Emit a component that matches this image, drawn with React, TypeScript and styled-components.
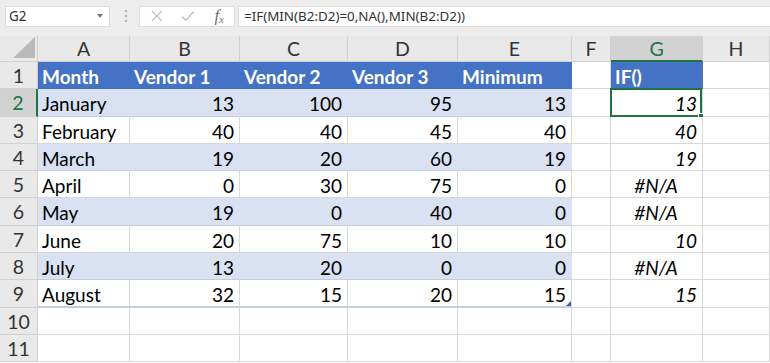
import React from 'react';
import styled, { createGlobalStyle, css } from 'styled-components';

const GlobalStyle = createGlobalStyle`
  html, body { margin: 0; padding: 0; background: #ffffff; }
  body { font-family: Lato, "Liberation Sans", sans-serif; }
`;

type Kind = 'head' | 'band' | 'plain';
type Align = 'left' | 'right' | 'center';

interface Row {
  kind: Kind;
  cells: string[];
  g: string;
  gAlign: Align;
}

const rows: Row[] = [
  { kind: 'head', cells: ['Month', 'Vendor 1', 'Vendor 2', 'Vendor 3', 'Minimum'], g: 'IF()', gAlign: 'left' },
  { kind: 'band', cells: ['January', '13', '100', '95', '13'], g: '13', gAlign: 'right' },
  { kind: 'plain', cells: ['February', '40', '40', '45', '40'], g: '40', gAlign: 'right' },
  { kind: 'band', cells: ['March', '19', '20', '60', '19'], g: '19', gAlign: 'right' },
  { kind: 'plain', cells: ['April', '0', '30', '75', '0'], g: '#N/A', gAlign: 'center' },
  { kind: 'band', cells: ['May', '19', '0', '40', '0'], g: '#N/A', gAlign: 'center' },
  { kind: 'plain', cells: ['June', '20', '75', '10', '10'], g: '10', gAlign: 'right' },
  { kind: 'band', cells: ['July', '13', '20', '0', '0'], g: '#N/A', gAlign: 'center' },
  { kind: 'plain', cells: ['August', '32', '15', '20', '15'], g: '15', gAlign: 'right' },
];

const rowHeights = [27, 28, 27, 27, 27, 28, 27, 27, 28, 27, 27];
const columns = ['A', 'B', 'C', 'D', 'E', 'F', 'G', 'H'];

const App: React.FC = () => {
  return (
    <>
      <GlobalStyle />
      <Window>
        <Toolbar>
          <NameBox>
            <span>G2</span>
            <svg width="6" height="4" viewBox="0 0 6 4">
              <path d="M0 0 L6 0 L3 4 Z" fill="#7a7a7a" />
            </svg>
          </NameBox>
          <Grip>
            <i /><i /><i />
          </Grip>
          <FxBox>
            <svg width="14" height="14" viewBox="0 0 14 14">
              <path d="M2 2 L12 12 M12 2 L2 12" stroke="#b8b8b8" strokeWidth="1.3" fill="none" />
            </svg>
            <svg width="16" height="14" viewBox="0 0 16 14">
              <path d="M2 7.5 L6 11.5 L14 2.5" stroke="#b8b8b8" strokeWidth="1.3" fill="none" />
            </svg>
            <FxLabel>f<sub>x</sub></FxLabel>
          </FxBox>
          <FormulaInput>=IF(MIN(B2:D2)=0,NA(),MIN(B2:D2))</FormulaInput>
        </Toolbar>

        <Sheet $heights={rowHeights}>
          <Corner>
            <svg width="22" height="21" viewBox="0 0 22 21">
              <path d="M22 0 L22 21 L0 21 Z" fill="#b9b9b9" />
            </svg>
          </Corner>
          {columns.map((c) => (
            <ColHeader key={c} $selected={c === 'G'}>{c}</ColHeader>
          ))}

          {Array.from({ length: 11 }, (_, i) => {
            const r = rows[i];
            const num = i + 1;
            return (
              <React.Fragment key={num}>
                <RowHeader $selected={num === 2}>{num}</RowHeader>
                {columns.slice(0, 5).map((c, ci) => {
                  const text = r ? r.cells[ci] : '';
                  return (
                    <Cell key={c} $kind={r ? r.kind : 'plain'}
                      $align={ci === 0 || r?.kind === 'head' ? 'left' : 'right'}
                      $last={num === 9}>
                      {text}
                      {num === 9 && c === 'E' && <ResizeHandle />}
                    </Cell>
                  );
                })}
                <Cell $kind="plain" $align="left" />
                <Cell $kind={r?.kind === 'head' ? 'head' : 'plain'}
                  $align={r ? r.gAlign : 'right'} $italic={!!r && r.kind !== 'head'}>
                  {r ? r.g : ''}
                  {num === 2 && <Selection><FillHandle /></Selection>}
                </Cell>
                <Cell $kind="plain" $align="left" />
              </React.Fragment>
            );
          })}
        </Sheet>
      </Window>
    </>
  );
};

const Window = styled.div`
  width: 770px;
  height: 363px;
  overflow: hidden;
  background: #ffffff;
`;

const Toolbar = styled.div`
  align-items: center;
  background: #ededed;
  box-sizing: border-box;
  display: flex;
  height: 36px;
  padding: 0 0 4px 5px;
`;

const boxCss = css`
  background: #ffffff;
  border: 1px solid #dcdcdc;
  box-sizing: border-box;
  height: 21px;
`;

const NameBox = styled.div`
  ${boxCss};
  align-items: center;
  color: #333333;
  display: flex;
  font-family: "Noto Sans", "Liberation Sans", sans-serif;
  font-size: 13.5px;
  justify-content: space-between;
  padding: 0 6px 0 3px;
  width: 105px;
`;

const Grip = styled.div`
  display: flex;
  flex-direction: column;
  gap: 3px;
  padding: 0 12px 0 15px;
  i {
    background: #b0b0b0;
    display: block;
    height: 2px;
    width: 2px;
  }
`;

const FxBox = styled.div`
  ${boxCss};
  align-items: center;
  display: flex;
  gap: 16px;
  padding: 0 10px 0 10px;
  width: 96px;
`;

const FxLabel = styled.span`
  color: #707070;
  font-family: "Liberation Serif", serif;
  font-size: 17px;
  font-style: italic;
  line-height: 1;
  margin-left: 3px;
  sub { font-size: 11px; vertical-align: -2px; }
`;

const FormulaInput = styled.div`
  ${boxCss};
  align-items: center;
  border-right: none;
  color: #333333;
  display: flex;
  flex: 1;
  font-family: "Noto Sans", "Liberation Sans", sans-serif;
  font-size: 13.4px;
  margin-left: 3px;
  padding-left: 5px;
`;

const Sheet = styled.div<{ $heights: number[] }>`
  display: grid;
  grid-template-columns: 38px 92px 110px 108px 110px 114px 39px 92px 67px;
  grid-template-rows: 26px ${(p) => p.$heights.map((h) => `${h}px`).join(' ')};
`;

const headerCss = css`
  align-items: center;
  background: #e9e9e9;
  border-bottom: 1px solid #d0d0d0;
  border-right: 1px solid #d0d0d0;
  box-sizing: border-box;
  color: #333333;
  display: flex;
  font-family: Lato, "Liberation Sans", sans-serif;
  font-size: 19.5px;
  justify-content: center;
`;

const Corner = styled.div`
  ${headerCss};
  align-items: flex-end;
  justify-content: flex-end;
  padding: 0 2px 3px 0;
`;

const ColHeader = styled.div<{ $selected?: boolean }>`
  ${headerCss};
  ${(p) => p.$selected && css`
    background: #d2d2d2;
    border-bottom: 2px solid #217346;
    color: #217346;
  `}
`;

const RowHeader = styled.div<{ $selected?: boolean }>`
  ${headerCss};
  ${(p) => p.$selected && css`
    background: #d2d2d2;
    border-right: 2px solid #217346;
    color: #217346;
  `}
`;

const kindCss = {
  head: css`
    background: #4472c4;
    border-bottom: 1px solid #4472c4;
    border-right: 1px solid #4472c4;
    color: #ffffff;
    font-weight: 700;
  `,
  band: css`
    background: #d9e1f2;
    border-bottom: 1px solid #c3cde0;
    border-right: 1px solid #d9e1f2;
    color: #000000;
  `,
  plain: css`
    background: #ffffff;
    border-bottom: 1px solid #d8d8d8;
    border-right: 1px solid #d8d8d8;
    color: #000000;
  `,
};

const Cell = styled.div<{ $kind: Kind; $align: Align; $italic?: boolean; $last?: boolean }>`
  align-items: center;
  box-sizing: border-box;
  display: flex;
  font-family: Lato, "Liberation Sans", sans-serif;
  font-size: 19px;
  font-style: ${(p) => (p.$italic ? 'italic' : 'normal')};
  justify-content: ${(p) => ({ left: 'flex-start', right: 'flex-end', center: 'center' }[p.$align])};
  padding: 2px 5px 0 4px;
  position: relative;
  white-space: nowrap;
  ${(p) => kindCss[p.$kind]};
  ${(p) => p.$last && css`border-bottom: 2px solid #c5cee0;`}
`;

const Selection = styled.div`
  border: 2px solid #217346;
  bottom: -1px;
  left: -1px;
  pointer-events: none;
  position: absolute;
  right: 0;
  top: -1px;
`;

const FillHandle = styled.div`
  background: #217346;
  border: 1px solid #ffffff;
  bottom: -4px;
  height: 4px;
  position: absolute;
  right: -4px;
  width: 4px;
`;

const ResizeHandle = styled.div`
  border-bottom: 5px solid #3a5fb0;
  border-left: 5px solid transparent;
  bottom: 0;
  position: absolute;
  right: 0;
`;

export default App;
